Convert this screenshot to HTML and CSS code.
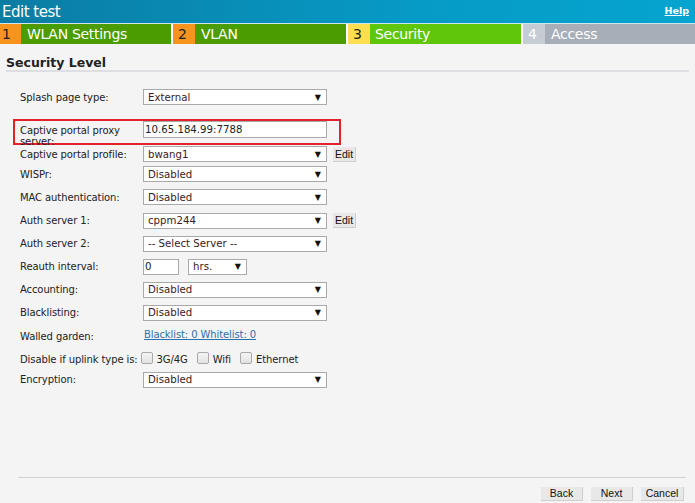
FILE: index.html
```html
<!DOCTYPE html>
<html>
<head>
<meta charset="utf-8">
<link rel="stylesheet" href="styles.css">
</head>
<body>
<div class="titlebar">
  <span class="title">Edit test</span>
  <a class="help" href="#">Help</a>
</div>
<div class="tabs">
  <div class="tab done"><span class="num">1</span><span class="lbl">WLAN Settings</span></div>
  <div class="tab done"><span class="num">2</span><span class="lbl">VLAN</span></div>
  <div class="tab active"><span class="num">3</span><span class="lbl">Security</span></div>
  <div class="tab todo"><span class="num">4</span><span class="lbl">Access</span></div>
</div>
<div class="content">
  <div class="section-title">Security Level</div>
  <div class="form">
    <div class="row r-first">
      <div class="label">Splash page type:</div>
      <div class="select w184"><span>External</span><span class="arrow">▼</span></div>
    </div>
    <div class="highlight">
      <div class="label two">Captive portal proxy<br>server:</div>
      <div class="input w184">10.65.184.99:7788</div>
    </div>
    <div class="row r-profile">
      <div class="label">Captive portal profile:</div>
      <div class="select w184"><span>bwang1</span><span class="arrow">▼</span></div>
      <span class="edit">Edit</span>
    </div>
    <div class="row r-wispr">
      <div class="label">WISPr:</div>
      <div class="select w184"><span>Disabled</span><span class="arrow">▼</span></div>
    </div>
    <div class="row r-mac">
      <div class="label">MAC authentication:</div>
      <div class="select w184"><span>Disabled</span><span class="arrow">▼</span></div>
    </div>
    <div class="row">
      <div class="label">Auth server 1:</div>
      <div class="select w184"><span>cppm244</span><span class="arrow">▼</span></div>
      <span class="edit">Edit</span>
    </div>
    <div class="row">
      <div class="label">Auth server 2:</div>
      <div class="select w184"><span>-- Select Server --</span><span class="arrow">▼</span></div>
    </div>
    <div class="row">
      <div class="label">Reauth interval:</div>
      <div class="input w36">0</div>
      <div class="select w59 ml9"><span>hrs.</span><span class="arrow">▼</span></div>
    </div>
    <div class="row">
      <div class="label">Accounting:</div>
      <div class="select w184"><span>Disabled</span><span class="arrow">▼</span></div>
    </div>
    <div class="row">
      <div class="label">Blacklisting:</div>
      <div class="select w184"><span>Disabled</span><span class="arrow">▼</span></div>
    </div>
    <div class="row r-walled">
      <div class="label">Walled garden:</div>
      <a class="link" href="#">Blacklist: 0 Whitelist: 0</a>
    </div>
    <div class="row r-uplink">
      <div class="label">Disable if uplink type is:</div>
      <span class="cb"></span><span class="cbl">3G/4G</span>
      <span class="cb"></span><span class="cbl">Wifi</span>
      <span class="cb"></span><span class="cbl">Ethernet</span>
    </div>
    <div class="row r-last">
      <div class="label">Encryption:</div>
      <div class="select w184"><span>Disabled</span><span class="arrow">▼</span></div>
    </div>
  </div>
</div>
<div class="footer">
  <div class="footer-line"></div>
  <div class="buttons">
    <span class="btn">Back</span>
    <span class="btn">Next</span>
    <span class="btn">Cancel</span>
  </div>
</div>
</body>
</html>
```
FILE: styles.css
```css
html, body {
  margin: 0;
  padding: 0;
  background: #f4f4f4;
  width: 695px;
  height: 503px;
  overflow: hidden;
  font-family: "DejaVu Sans", Verdana, sans-serif;
  color: #222;
}
.titlebar {
  height: 23px;
  background: linear-gradient(to right, #0b7ca3, #069bc6 60%, #06a4d0);
  display: flex;
  align-items: center;
  justify-content: space-between;
  border-bottom: 1px solid #cfe6ee;
}
.title {
  color: #fff;
  font-size: 15px;
  padding-left: 2px;
  letter-spacing: -0.5px;
}
.help {
  color: #fff;
  font-size: 9.5px;
  font-weight: bold;
  margin-right: 6px;
  margin-top: -2px;
  text-decoration: underline;
}
.tabs {
  display: flex;
  height: 20px;
  background: #fff;
  gap: 2px;
}
.tab {
  display: flex;
  flex: 0 0 auto;
  height: 20px;
  font-size: 14px;
  line-height: 20px;
}
.tab:nth-child(1) { width: 171px; }
.tab:nth-child(2) { width: 173px; }
.tab:nth-child(3) { width: 173px; }
.tab:nth-child(4) { flex: 1 1 auto; }
.num {
  width: 21px;
  padding-left: 2px;
  box-sizing: border-box;
  color: #222;
}
.tab:nth-child(2) .num { width: 22px; padding-left: 5px; }
.tab:nth-child(3) .num, .tab:nth-child(4) .num { width: 22px; padding-left: 5px; }
.lbl {
  flex: 1;
  color: #fff;
  padding-left: 6px;
  letter-spacing: -0.3px;
}
.tab.done .num { background: #f7941d; }
.tab.done .lbl { background: #4b9c00; }
.tab.active .num { background: #ffde4f; }
.tab.active .lbl { background: #5fc60c; padding-left: 5px; }
.tab.todo .num { background: #c6ccd3; color: #fff; }
.tab.todo .lbl { background: #a7aeb7; padding-left: 6px; }

.content {
  padding: 0 6px;
}
.section-title {
  font-size: 12.5px;
  font-weight: bold;
  color: #222;
  padding-top: 12px;
  height: 14px;
  line-height: 14px;
  border-bottom: 2px solid #dcdee1;
}
.form {
  padding-left: 7px;
  padding-top: 14px;
  font-size: 10px;
  letter-spacing: -0.1px;
}
.row {
  display: flex;
  align-items: center;
  height: 23px;
  padding-left: 7px;
  white-space: nowrap;
}
.r-first { height: 22px; margin-bottom: 11px; }
.r-profile { height: 18px; }
.r-wispr { height: 22px; }
.r-mac { height: 24px; }
.r-walled { height: 24px; }
.r-uplink { height: 22px; }
.r-last { height: 19px; }
.label {
  width: 123px;
  flex: 0 0 123px;
  color: #222;
  white-space: nowrap;
}
.r-uplink .label { width: auto; flex: 0 0 auto; margin-right: 3px; }
.label.two {
  line-height: 11px;
  padding-top: 4px;
}
.highlight {
  display: flex;
  align-items: flex-start;
  width: 319px;
  height: 22px;
  border: 2px solid #e3222b;
  padding-left: 5px;
}
.select, .input {
  box-sizing: border-box;
  height: 16px;
  background: #fff;
  border: 1px solid #a9a9a9;
  display: flex;
  align-items: center;
  justify-content: space-between;
  padding: 0 5px 0 4px;
  color: #3a1a24;
  font-size: 10.2px;
  letter-spacing: 0;
}
.input {
  height: 17px;
  padding-left: 1px;
  color: #222;
}
.row .input { height: 16px; }
.w184 { width: 184px; flex: 0 0 184px; }
.w36 { width: 36px; flex: 0 0 36px; }
.w59 { width: 59px; flex: 0 0 59px; }
.ml9 { margin-left: 9px; }
.arrow {
  font-size: 8px;
  color: #111;
}
.edit {
  margin-left: 6px;
  width: 22px;
  height: 14px;
  line-height: 14px;
  text-align: center;
  background: #e8e8e8;
  border-right: 1px solid #cfcfcf;
  border-bottom: 1px solid #cfcfcf;
  font-family: "Liberation Sans", Arial, sans-serif;
  font-size: 10.5px;
  letter-spacing: 0;
  color: #111;
}
.link {
  color: #2d6fa8;
  text-decoration: underline;
  margin-left: 1px;
  margin-top: -4px;
}
.cb {
  width: 10px;
  height: 10px;
  border: 1px solid #a9a9a9;
  border-radius: 2px;
  background: linear-gradient(#f4f4f4, #e2e2e2);
  margin-right: 4px;
  margin-top: -3px;
}
.cbl {
  margin-right: 9px;
}
.footer {
  position: absolute;
  left: 0;
  top: 477px;
  width: 695px;
}
.footer-line {
  margin-left: 18px;
  width: 668px;
  border-top: 1px solid #cfd4d9;
}
.buttons {
  display: flex;
  justify-content: flex-end;
  gap: 8px;
  padding-right: 11px;
  padding-top: 9px;
}
.btn {
  box-sizing: border-box;
  width: 42px;
  height: 14px;
  line-height: 13px;
  text-align: center;
  background: #e8e8e8;
  border-right: 1px solid #cfcfcf;
  border-bottom: 1px solid #cfcfcf;
  font-family: "Liberation Sans", Arial, sans-serif;
  font-size: 10.5px;
  color: #111;
}
.btn:last-child { width: 43px; }
```
